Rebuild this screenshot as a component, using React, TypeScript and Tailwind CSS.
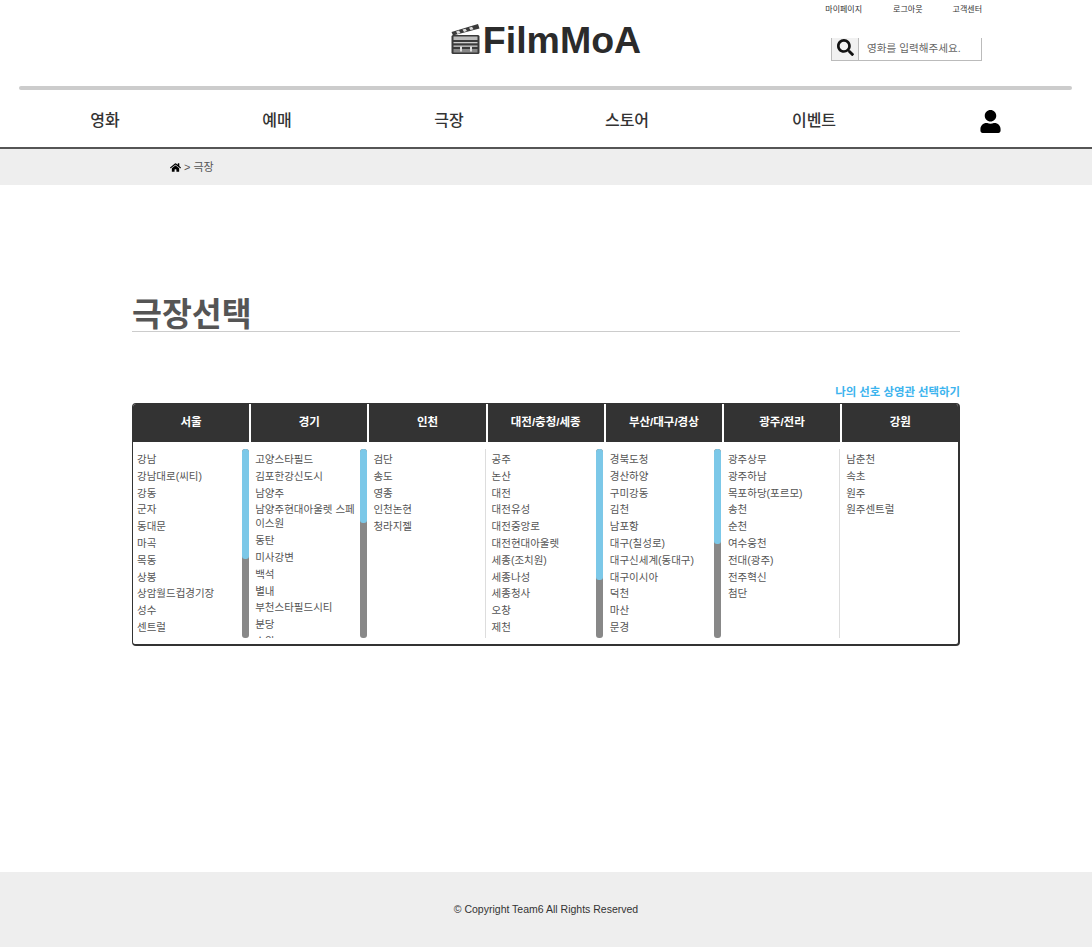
import { FaHome, FaSearch, FaUser } from 'react-icons/fa'

const font = "font-['Liberation_Sans','Noto_Sans_CJK_KR',sans-serif]"

type Region = {
  name: string
  theaters: string[]
  thumb?: string
  divider?: boolean
}

const regions: Region[] = [
  {
    name: '서울',
    thumb: 'h-[110px]',
    theaters: ['강남', '강남대로(씨티)', '강동', '군자', '동대문', '마곡', '목동', '상봉', '상암월드컵경기장', '성수', '센트럴'],
  },
  {
    name: '경기',
    thumb: 'h-[74px]',
    theaters: ['고양스타필드', '김포한강신도시', '남양주', '남양주현대아울렛 스페이스원', '동탄', '미사강변', '백석', '별내', '부천스타필드시티', '분당', '수원'],
  },
  {
    name: '인천',
    divider: true,
    theaters: ['검단', '송도', '영종', '인천논현', '청라지젤'],
  },
  {
    name: '대전/충청/세종',
    thumb: 'h-[131px]',
    theaters: ['공주', '논산', '대전', '대전유성', '대전중앙로', '대전현대아울렛', '세종(조치원)', '세종나성', '세종청사', '오창', '제천'],
  },
  {
    name: '부산/대구/경상',
    thumb: 'h-[95px]',
    theaters: ['경북도청', '경산하양', '구미강동', '김천', '남포항', '대구(칠성로)', '대구신세계(동대구)', '대구이시아', '덕천', '마산', '문경'],
  },
  {
    name: '광주/전라',
    divider: true,
    theaters: ['광주상무', '광주하남', '목포하당(포르모)', '송천', '순천', '여수웅천', '전대(광주)', '전주혁신', '첨단'],
  },
  {
    name: '강원',
    theaters: ['남춘천', '속초', '원주', '원주센트럴'],
  },
]

const navItems = [
  { label: '영화', cls: 'w-[172px]' },
  { label: '예매', cls: 'w-[172px]' },
  { label: '극장', cls: 'w-[172px]' },
  { label: '스토어', cls: 'w-[184px]' },
  { label: '이벤트', cls: 'w-[190px]' },
]

const Clapper = () => (
  <svg width="30" height="30" viewBox="0 0 30 30" className="shrink-0 self-start mt-[3px]">
    <path d="M0.5 8 27 0l1.5 4.5L2 11.5z" fill="#3a3a3a" />
    <path d="M5 7.5l3-.9 1.5 2.4-3 .9zM11.5 5.6l3-.9 1.5 2.4-3 .9zM18 3.7l3-.9 1.5 2.4-3 .9z" fill="#dddddd" />
    <rect x="0.5" y="11" width="28" height="19" rx="1.5" fill="#3a3a3a" />
    <rect x="2.5" y="12.5" width="24" height="3.5" fill="#bbbbbb" />
    <rect x="2.5" y="18" width="24" height="1.3" fill="#cccccc" />
    <rect x="2.5" y="21.5" width="24" height="1.3" fill="#cccccc" />
    <rect x="2.5" y="25" width="24" height="3.5" fill="#888888" />
    <rect x="9" y="22.5" width="2" height="5" fill="#dddddd" />
    <rect x="19" y="22.5" width="2" height="5" fill="#dddddd" />
  </svg>
)

const RegionColumn = ({ region }: { region: Region }) => (
  <div className="w-[118.2px] shrink-0">
    <div className="h-[38px] bg-[#333333] border-r-2 border-white flex items-center justify-center text-[11.5px] font-bold text-white">
      {region.name}
    </div>
    <div className="h-[189px] mt-[7px] flex">
      <ul className={`flex-1 min-w-0 overflow-hidden pt-[3px] pl-[4px] text-[10.5px] leading-[14px] text-[#555555] ${region.divider ? 'border-r border-[#dddddd]' : ''}`}>
        {region.theaters.map((t) => (
          <li key={t} className="mb-[2.8px]">{t}</li>
        ))}
      </ul>
      {region.thumb ? (
        <div className="w-[7px] ml-[3px] mr-[2.6px] rounded-[3px] bg-[#888888] overflow-hidden">
          <div className={`${region.thumb} bg-[#7cc8e8] rounded-[3px]`} />
        </div>
      ) : (
        <div className={region.divider ? 'w-[2px]' : 'w-[12px]'} />
      )}
    </div>
  </div>
)

export default function App() {
  return (
    <div className={`${font} w-[1092px] h-[948px] bg-white flex flex-col overflow-hidden text-[#333333]`}>
      {/* Top header */}
      <header className="h-[86px] shrink-0 relative flex justify-center">
        <div className="flex items-center h-[40px] mt-[21px] gap-[2px]">
          <Clapper />
          <span className="text-[37.5px] font-bold leading-none text-[#2b2b2b]">FilmMoA</span>
        </div>
        <div className="absolute right-[110px] top-[5px] flex gap-[30px] text-[8px] leading-[10px] text-[#333333]">
          <span className="mr-px">마이페이지</span>
          <span>로그아웃</span>
          <span>고객센터</span>
        </div>
        <div className="absolute left-[831px] top-[38px] w-[151px] h-[23px] flex border-x border-b border-[#bbbbbb]">
          <div className="w-[27px] bg-[#f1f1f1] border-r border-[#bbbbbb] flex items-center justify-center text-[#111111]">
            <FaSearch size={17} className="mb-[4px]" />
          </div>
          <div className="pl-[8px] text-[10.6px] leading-[21px] text-[#666666]">영화를 입력해주세요.</div>
        </div>
      </header>

      <div className="h-[4px] mx-[19px] w-[1053px] bg-[#cccccc] rounded-full shrink-0" />

      {/* Nav */}
      <nav className="h-[59px] shrink-0 flex items-center pl-[19px] pt-[5px] border-b-2 border-[#555555] text-[16px] font-medium text-[#333333]">
        {navItems.map((n) => (
          <div key={n.label} className={`${n.cls} shrink-0 text-center`}>
            {n.label}
          </div>
        ))}
        <div className="w-[162px] shrink-0 flex justify-center text-black">
          <FaUser size={23} />
        </div>
      </nav>

      {/* Breadcrumb */}
      <div className="h-[36px] shrink-0 bg-[#eeeeee] flex items-center pl-[170px] gap-[3px] text-[11px] text-[#555555]">
        <FaHome size={11} className="text-black mt-[1px]" />
        <span>&gt; 극장</span>
      </div>

      {/* Main */}
      <main className="flex-1 w-[828px] ml-[132px]">
        <h1 className="mt-[109px] h-[38px] text-[32.5px] leading-[42px] font-bold text-[#555555] border-b border-[#cccccc]">
          극장선택
        </h1>
        <div className="mt-[53px] text-right text-[11.4px] leading-[14px] font-bold text-[#3db4ee]">
          나의 선호 상영관 선택하기
        </div>
        <div className="mt-[4px] h-[243px] border border-b-2 border-r-2 border-[#333333] rounded-[4px] flex overflow-hidden bg-white">
          {regions.map((r) => (
            <RegionColumn key={r.name} region={r} />
          ))}
        </div>
      </main>

      <footer className="h-[75px] mb-px shrink-0 bg-[#eeeeee] flex items-center justify-center text-[10.5px] text-[#333333]">
        © Copyright Team6 All Rights Reserved
      </footer>
    </div>
  )
}
